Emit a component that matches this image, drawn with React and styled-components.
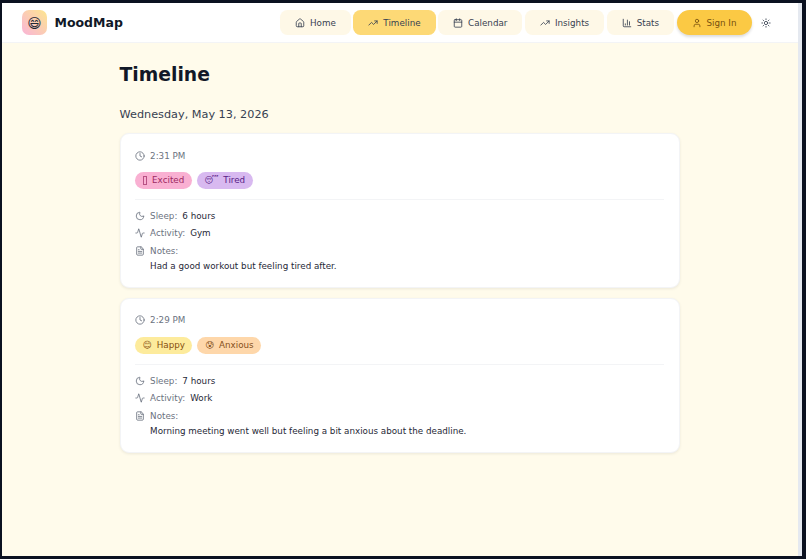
import React from 'react';
import styled, { createGlobalStyle } from 'styled-components';
import { House, TrendingUp, Calendar, ChartColumn, User, Sun, Clock, Moon, Activity, FileText } from 'lucide-react';

const Global = createGlobalStyle`
  html, body { margin: 0; padding: 0; height: 100%; overflow: hidden; background: #0b1120; }
  body { font-family: "DejaVu Sans", sans-serif; }
  #root { height: 100%; }
  * { box-sizing: border-box; }
`;

const Frame = styled.div`
  width: 806px; height: 559px; padding: 3px 4px 3px 2px; background: #0b1120;
`;
const Screen = styled.div`
  height: 100%; background: #fffbeb; display: flex; flex-direction: column; overflow: hidden;
  border-right: 4px solid #e5e9f0;
`;
const Header = styled.header`
  height: 40px; flex: none; background: #fff; border-bottom: 1px solid #f3f4f6;
  display: flex; align-items: center; padding: 0 20.5px 0 20px; justify-content: space-between;
`;
const Brand = styled.div`display: flex; align-items: center; gap: 7.5px;`;
const LogoBox = styled.div`
  width: 25px; height: 25px; border-radius: 7px; display: flex; align-items: center; justify-content: center;
  background: linear-gradient(45deg, #f9b4d8, #fde68f); font-size: 13.75px; color: #1f2937;
`;
const BrandName = styled.span`font-size: 12.5px; font-weight: 700; color: #111827;`;
const Nav = styled.nav`display: flex; align-items: center; gap: 2.5px;`;
const NavItem = styled.a`
  height: 25px; display: flex; align-items: center; justify-content: center; gap: 5px;
  padding: 0 15px; border-radius: 7.5px; font-size: 8.75px; color: #374151;
  background: ${p => p.$active ? '#fdd976' : '#fef8e7'};
`;
const SignIn = styled.button`
  height: 25px; border: 0; margin: 0; padding: 0 15px; border-radius: 12.5px; display: flex; align-items: center; gap: 5px;
  background: #fbc944; color: #78500f; font: 8.75px "DejaVu Sans", sans-serif;
  box-shadow: 0 2px 3px rgba(0,0,0,.14);
`;
const ThemeToggle = styled.button`
  width: 23.5px; height: 25px; border: 0; background: transparent; padding: 0;
  display: flex; align-items: center; justify-content: center; color: #374151;
`;
const Main = styled.main`width: 560px; margin: 0 0 0 117.5px; padding-top: 19.5px;`;
const Title = styled.h1`margin: 0; font-size: 18.75px; line-height: 24px; font-weight: 700; color: #111827;`;
const DateHeading = styled.h2`margin: 19px 0 0; font-size: 11.25px; line-height: 18px; font-weight: 400; color: #374151;`;
const Card = styled.section`
  margin-top: 9.6px; background: #fff; border: 1px solid #f3f4f6; border-radius: 9px; padding: 15.5px 14.6px 14px;
  box-shadow: 0 1px 3px rgba(0,0,0,.08);
  & + & { margin-top: 9.2px; }
`;
const Time = styled.div`display: flex; align-items: center; gap: 5px; height: 12px; font-size: 8.75px; color: #6b7280;`;
const Tags = styled.div`display: flex; gap: 5px; margin-top: 10.4px;`;
const Tag = styled.span`
  height: 17px; padding: 0 7.5px; border-radius: 8.5px; display: flex; align-items: center; gap: 5px; font-size: 8.75px;
  background: ${p => p.$bg}; color: ${p => p.$fg};
`;
const Tofu = styled.span`
  width: 4.5px; height: 8.5px; border: .6px solid currentColor; display: block; opacity: .7;
`;
const Divider = styled.div`height: 1px; background: #f3f4f6; margin: 10px 0;`;
const Row = styled.div`display: flex; align-items: center; gap: 5px; height: 12px; font-size: 8.75px; margin-top: ${p => p.$mt || 0}px;`;
const Label = styled.span`color: #6b7280;`;
const Value = styled.span`color: #1f2937;`;
const Note = styled.p`margin: 3.5px 0 0 15px; font-size: 8.75px; line-height: 13px; color: #1f2937;`;

const nav = [
  [House, 'Home'], [TrendingUp, 'Timeline', true], [Calendar, 'Calendar'],
  [TrendingUp, 'Insights'], [ChartColumn, 'Stats'],
];
const moods = {
  Excited: [<Tofu />, '#f9b0d2', '#9d2a62'], Tired: [<span>😴</span>, '#d8b9f0', '#581c87'],
  Happy: [<span>😊</span>, '#fdeb9c', '#854d0e'], Anxious: [<span>😰</span>, '#fed7aa', '#85501a'],
};
const entries = [
  { time: '2:31 PM', tags: ['Excited', 'Tired'], sleep: '6 hours', activity: 'Gym', note: 'Had a good workout but feeling tired after.' },
  { time: '2:29 PM', tags: ['Happy', 'Anxious'], sleep: '7 hours', activity: 'Work', note: 'Morning meeting went well but feeling a bit anxious about the deadline.' },
];

export default function App() {
  return (
    <Frame>
      <Global />
      <Screen>
        <Header>
          <Brand>
            <LogoBox>😄</LogoBox>
            <BrandName>MoodMap</BrandName>
          </Brand>
          <Nav>
            {nav.map(([Icon, label, active]) => (
              <NavItem key={label} $active={active}><Icon size={10} strokeWidth={2} />{label}</NavItem>
            ))}
            <SignIn><User size={10} />Sign In</SignIn>
            <ThemeToggle aria-label="Theme"><Sun size={10} /></ThemeToggle>
          </Nav>
        </Header>
        <Main>
          <Title>Timeline</Title>
          <DateHeading>Wednesday, May 13, 2026</DateHeading>
          {entries.map(e => (
            <Card key={e.time}>
              <Time><Clock size={10} color="#6b7280" />{e.time}</Time>
              <Tags>
                {e.tags.map(t => (
                  <Tag key={t} $bg={moods[t][1]} $fg={moods[t][2]}>{moods[t][0]}{t}</Tag>
                ))}
              </Tags>
              <Divider />
              <Row><Moon size={10} color="#6b7280" /><Label>Sleep:</Label><Value>{e.sleep}</Value></Row>
              <Row $mt={5.5}><Activity size={10} color="#6b7280" /><Label>Activity:</Label><Value>{e.activity}</Value></Row>
              <Row $mt={5.5}><FileText size={10} color="#6b7280" /><Label>Notes:</Label></Row>
              <Note>{e.note}</Note>
            </Card>
          ))}
        </Main>
      </Screen>
    </Frame>
  );
}
